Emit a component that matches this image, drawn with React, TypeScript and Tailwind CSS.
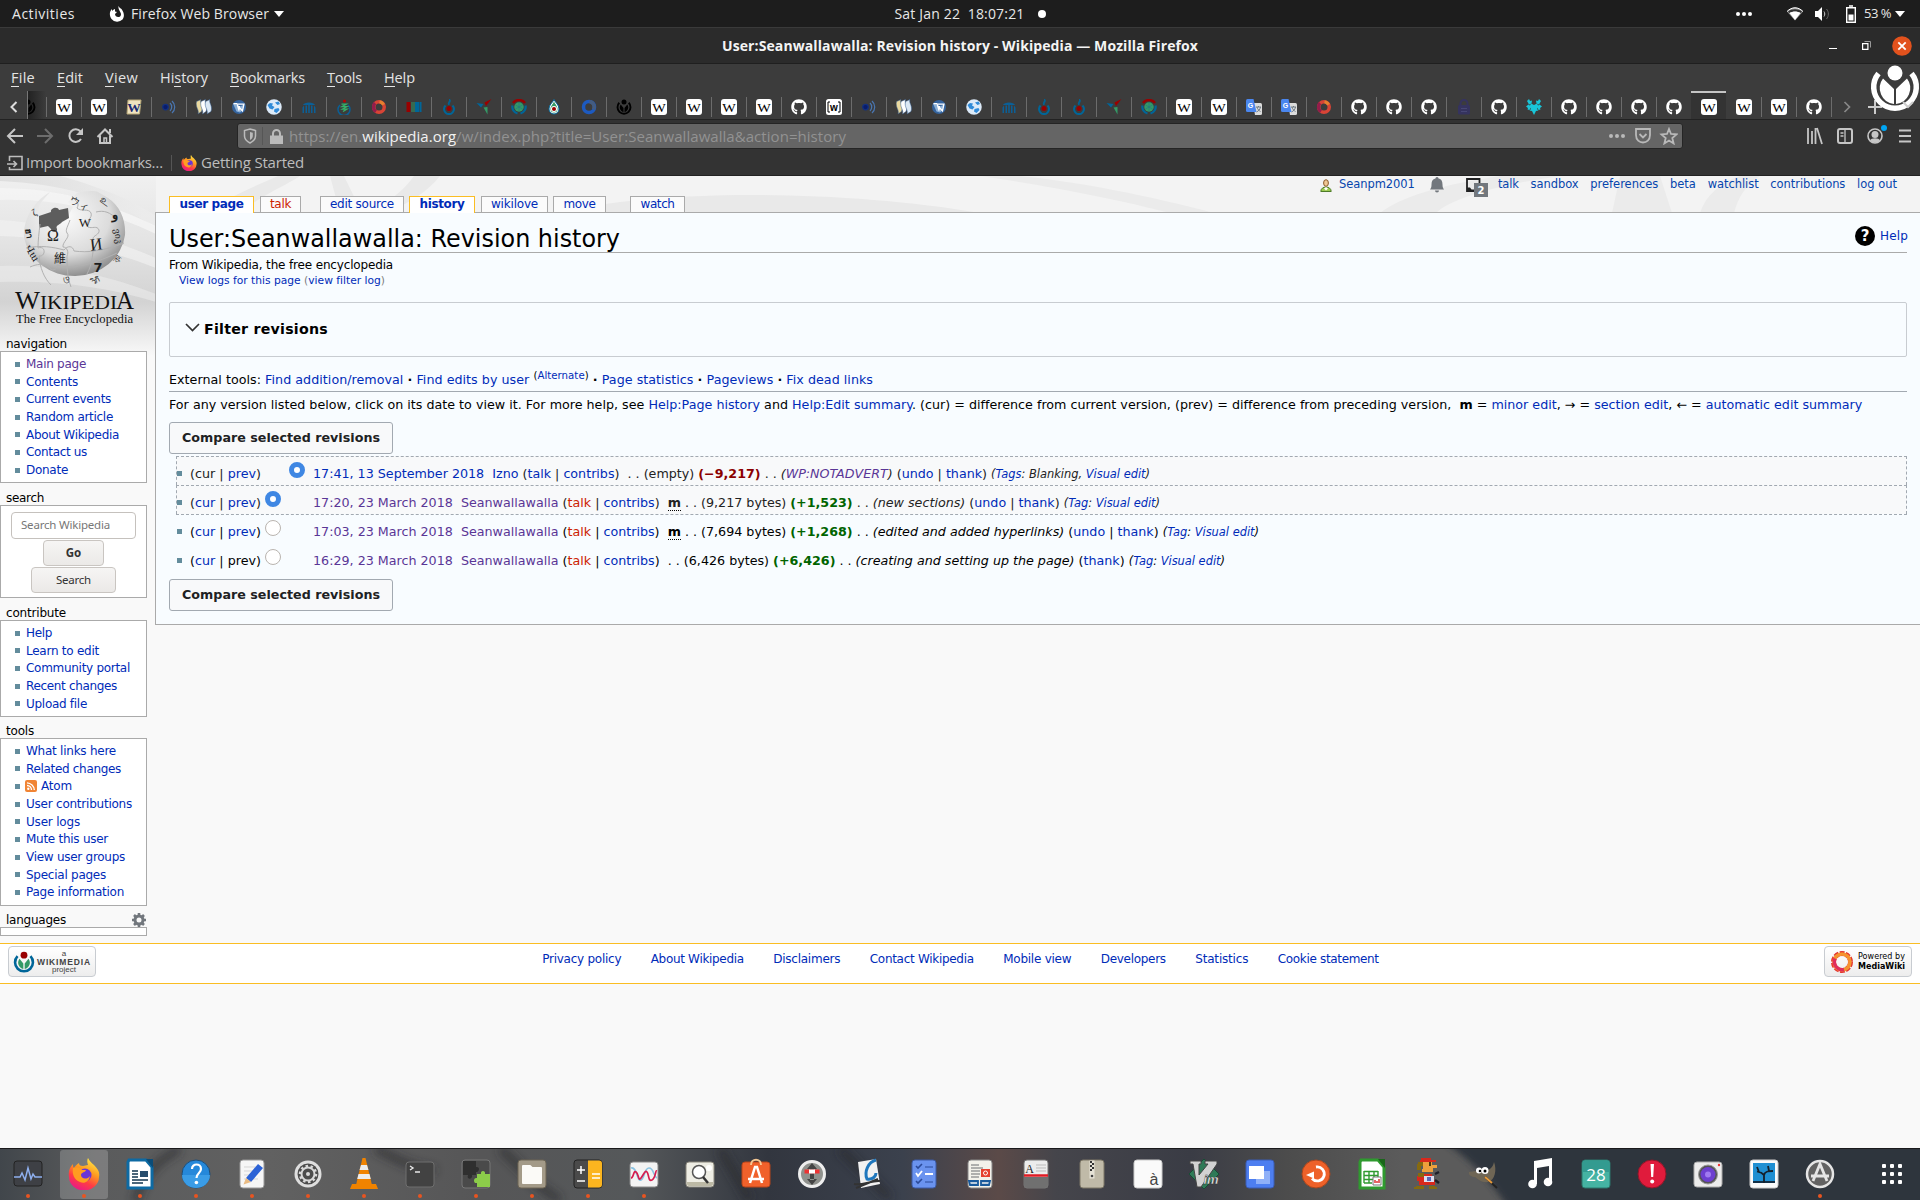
import { useLayoutEffect, useRef, useState } from "react";
import type { ReactNode } from "react";
import { FaGithub } from "react-icons/fa";

/** Inline text whose tracking is adjusted so that it spans exactly `w` pixels. */
function Fit({ w, children, className = "" }: { w: number; children: ReactNode; className?: string }) {
  const ref = useRef<HTMLSpanElement>(null);
  const [ls, setLs] = useState(0);
  useLayoutEffect(() => {
    const el = ref.current;
    if (!el) return;
    const n = (el.textContent || "").length;
    const natural = el.getBoundingClientRect().width - ls * n;
    if (n > 1) setLs((w - natural) / n);
  }, [w]);
  return (
    <span ref={ref} className={"inline-block whitespace-pre " + className} style={{ letterSpacing: ls + "px" }}>
      {children}
    </span>
  );
}

const L = ({ children }: { children: ReactNode }) => <a className="text-[#002bb8]">{children}</a>;
const V = ({ children }: { children: ReactNode }) => <a className="text-[#5a3696]">{children}</a>;
const R = ({ children }: { children: ReactNode }) => <a className="text-[#cc2200]">{children}</a>;

/* ---------- favicons ---------- */

const WikimediaMark = ({ body, ring, head }: { body: string; ring: string; head: string }) => (
  <>
    <circle cx="16" cy="6" r="5" fill={head} />
    <path d="M6.6 7.5A13 13 0 1 0 25.400 7.500" fill="none" stroke={ring} strokeWidth="3.800" />
    <path d="M9.500 11.200A9.200 9.200 0 0 0 15 26V18zM22.500 11.200A9.200 9.200 0 0 1 17 26V18z" fill={body} />
  </>
);

function Favicon({ kind }: { kind: string }) {
  if (kind === "gh") return <FaGithub className="size-4 text-white" />;
  if (kind === "W" || kind === "Wc")
    return (
      <svg className="size-4" viewBox="0 0 16 16">
        {kind === "W" ? (
          <rect width="16" height="16" rx="3" fill="#fff" />
        ) : (
          <path d="M2 1l13 0-1.500 14L1 15z" fill="#f0e4c0" stroke="#b9a878" />
        )}
        <text x="8" y="12.500" textAnchor="middle" fontFamily="Liberation Serif, serif" fontWeight={kind === "Wc" ? 700 : 400} fontSize="13.500" fill={kind === "Wc" ? "#1b2a70" : "#000"} textLength="13.500" lengthAdjust="spacingAndGlyphs">
          W
        </text>
      </svg>
    );
  return (
    <svg className="size-4" viewBox="0 0 32 32">
      {kind === "sound" && (
        <g fill="none" stroke="#4a76b0" strokeWidth="2.500">
          <circle cx="9" cy="16" r="5.500" fill="#0a1c6b" stroke="#12307f" />
          <path d="M18 8a11 11 0 0 1 0 16M22 4a16 16 0 0 1 0 24" />
        </g>
      )}
      {kind === "books" && (
        <g stroke="#31588c" strokeWidth="1">
          <path d="M1 5l9-4c-3 7 6 12 1 24l-7 5c3-9-6-13-3-25z" fill="#e9d9a0" />
          <path d="M10 5l9-4c-3 7 6 12 1 24l-7 5c3-9-6-13-3-25z" fill="#fff" />
          <path d="M19 5l9-4c-3 7 6 12 2 24l-8 5c3-9-6-13-3-25z" fill="#dce9f5" />
        </g>
      )}
      {kind === "wikt" && (
        <>
          <circle cx="16" cy="16" r="14" fill="#34639d" />
          <path d="M4 9l9 2 5 4 8-4-3 12-5 4-7-2z" fill="#8bb0d8" />
          <path d="M5 9h7l4 14 1-9M14 10h12l-3 14-8-9" stroke="#fff" strokeWidth="2.500" fill="none" />
        </>
      )}
      {kind === "globe" && (
        <>
          <circle cx="16" cy="16" r="15.500" fill="#dceaf8" />
          <path d="M3 12l5-4 6 1-2 4 5 3-4 5-6-2zM18 7l7-2 3 5-5 2zM17 20l8-2 2 4-6 6-5-3z" fill="#2f8ad8" />
        </>
      )}
      {kind === "bars" && (
        <path d="M3 28V17l3-4v15zm6 0V13h3v15zm5.500 0V12h3v16zM20 28V13h3v15zm6 0V13l3 4v11zM4 12C6 5 26 5 28 12z" fill="#0b5f96" />
      )}
      {kind === "helix" && (
        <>
          <circle cx="17" cy="4" r="3" fill="#b00" />
          <path d="M8 12a12 12 0 1 0 16 0" fill="none" stroke="#0b5f96" strokeWidth="3" />
          <path d="M11 10h10l-9 5h10l-9 5h9l-8 5" stroke="#35b06a" strokeWidth="2.500" fill="none" />
        </>
      )}
      {kind === "ring" && (
        <>
          <circle cx="16" cy="16" r="10.500" fill="none" stroke="#d84436" strokeWidth="7" />
          <path d="M8 8a11 11 0 0 0 2 17" fill="none" stroke="#941c4b" strokeWidth="6.500" />
          <path d="M17 5.500a10.500 10.500 0 0 1 8 6" fill="none" stroke="#e5802e" strokeWidth="6" />
        </>
      )}
      {kind === "bring" && (
        <>
          <circle cx="16" cy="16" r="11" fill="none" stroke="#1d5ac0" strokeWidth="7" />
          <path d="M17 5a11 11 0 0 1 8 16" fill="none" stroke="#445c80" strokeWidth="7" />
        </>
      )}
      {kind === "data" && (
        <>
          <path d="M1 6h8v20H1z" fill="#900" />
          <path d="M11 6h2v20h-2zm4 0h2v20h-2z" fill="#396" />
          <path d="M18 6h9v20h-9zm10 0h3v20h-3z" fill="#069" />
        </>
      )}
      {kind === "flame" && (
        <>
          <path d="M9 13a10 10 0 1 0 14 0" fill="none" stroke="#069" strokeWidth="4" />
          <path d="M17 0c4 5-1 7-1 12-4-4 2-7 1-12z" fill="#069" stroke="#069" strokeWidth="2" />
          <circle cx="16" cy="19" r="5" fill="#900" />
        </>
      )}
      {kind === "arrows" && (
        <>
          <path d="M31 0L20 14l-3-7z" fill="#900" />
          <path d="M1 8l14 2-5 7z" fill="#069" />
          <path d="M15 17l8-1v15z" fill="#396" />
        </>
      )}
      {kind === "meta" && (
        <>
          <path d="M4 8A14 12 0 0 1 28 8" fill="none" stroke="#900" strokeWidth="5" />
          <circle cx="16" cy="16" r="9.500" fill="#396" />
          <path d="M9 12l14 8M9 20l14-8M16 7v18" stroke="#1c6b8a" />
          <path d="M3 13a13.500 13.500 0 0 0 10 16M29 13a13.500 13.500 0 0 1-10 16" fill="none" stroke="#069" strokeWidth="4.500" />
        </>
      )}
      {kind === "drop" && (
        <>
          <path d="M16 1c3 7 10 10 10 19a10 10 0 0 1-20 0c0-9 7-12 10-19z" fill="#fff" stroke="#069" strokeWidth="2" />
          <path d="M16 5c3 7 7 9 7 15a7 7 0 0 1-14 0c0-6 4-8 7-15z" fill="#396" />
          <circle cx="16" cy="20" r="6" fill="#fff" />
          <circle cx="16" cy="20" r="4" fill="#900" />
        </>
      )}
      {kind === "wm" && <WikimediaMark body="#000" ring="#000" head="#000" />}
      {kind === "lw" && (
        <>
          <rect width="32" height="32" rx="5" fill="#fff" />
          <path d="M8 6H4v20h4M24 6h4v20h-4" fill="none" stroke="#000" strokeWidth="2" />
          <text x="16" y="23" textAnchor="middle" fontFamily="Liberation Sans, sans-serif" fontWeight="700" fontSize="20" fill="#000">w</text>
        </>
      )}
      {kind === "tr" && (
        <>
          <path d="M14 8h15a3 3 0 0 1 3 3v18a3 3 0 0 1-3 3H18z" fill="#dcdcdc" />
          <path d="M20 16h10M25 14v2m-3 0c1 5 4 7 7 9m0-9c-1 5-4 8-8 10" stroke="#65727c" strokeWidth="1.800" fill="none" />
          <path d="M3 0h12l6 26H3a3 3 0 0 1-3-3V3a3 3 0 0 1 3-3z" fill="#4a86ee" />
          <text x="9" y="18" textAnchor="middle" fontFamily="Liberation Sans, sans-serif" fontWeight="700" fontSize="14" fill="#fff">G</text>
        </>
      )}
      {kind === "lock" && (
        <>
          <path d="M9 14V9a7 7 0 0 1 14 0v5" fill="none" stroke="#35335f" strokeWidth="4" />
          <rect x="4" y="12" width="24" height="19" rx="3" fill="#35335f" />
          <path d="M10 19h12M10 25h12" stroke="#474775" strokeWidth="2" />
        </>
      )}
      {kind === "fox" && (
        <g fill="#19c5d8">
          <path d="M10 9l6 3 6-3 3 6-3 5 3 3-5 1-4 8-4-8-5-1 3-3-3-5z" />
          <path d="M2 4l4-4 2 4 4-1-1 6-5 2zM30 4l-4-4-2 4-4-1 1 6 5 2zM0 15l5-4 5 4-3 7-4-1 1-3zM32 15l-5-4-5 4 3 7 4-1-1-3z" />
        </g>
      )}
    </svg>
  );
}

const tabs =
  "W W Wc sound books wikt globe bars helix ring data flame arrows meta drop bring wm W W W W gh lw sound books wikt globe bars flame flame arrows meta W W tr tr ring gh gh gh lock gh fox gh gh gh gh W W W gh".split(" ");
const ACTIVE_TAB = 47;

/* ---------- shell and browser chrome ---------- */

const FirefoxLogo = ({ className, id }: { className: string; id: string }) => (
  <svg className={className} viewBox="0 0 32 32">
    <defs>
      <linearGradient id={id} x1="0.8" y1="0" x2="0.3" y2="1">
        <stop offset="0" stopColor="#fff04a" />
        <stop offset="0.4" stopColor="#ff9a1f" />
        <stop offset="0.7" stopColor="#ff3c45" />
        <stop offset="1" stopColor="#e8188a" />
      </linearGradient>
    </defs>
    <path d="M20 0c2 4 4 5 6 7 4 4 6 7 5 12a15 13.500 0 0 1-30 0C0 13 2 9 5 6c0 2 0 3 1 4 1-2 3-4 5-5 0 2 1 3 4 3l5-1c-1-3-1-5 0-7z" fill={`url(#${id})`} />
    <circle cx="17" cy="17" r="6.500" fill="#6a35d6" />
    <path d="M5 10c4-2 8 0 9 2l4 0c-1 3-5 2-5 5 0 4 6 5 9 1-1 6-6 8-10 6-6-2-8-8-7-14z" fill="#ff9d20" />
  </svg>
);

function TopBar() {
  return (
    <div className="grid h-[27px] grid-cols-3 items-center bg-[#1d1d1d] text-[14px] text-[#e8e8e8]">
      <div className="flex items-center">
        <Fit w={63} className="ml-3">Activities</Fit>
        <svg className="ml-[34px] size-4" viewBox="0 0 16 16">
          <path d="M9.500 0c1 2 2 2 3 3 3 4 3 8 1 10.500a7.500 7.500 0 0 1-11-.5C0 9.500.5 5 3 3v2c1-1 2-2 3-2v2.500l2 .5-2 2c0 4 6 4 6 .5 0-3-3-4-2.500-8.500z" fill="#fff" />
        </svg>
        <Fit w={138} className="ml-1.5">Firefox Web Browser</Fit>
        <i className="ml-[5px] border-x-[5px] border-t-[6px] border-x-transparent border-t-white" />
      </div>
      <div className="flex items-center justify-center">
        <Fit w={130} className="ml-[20px]">Sat Jan 22  18:07:21</Fit>
        <i className="ml-[13px] size-2 rounded-full bg-white" />
      </div>
      <div className="flex items-center justify-end pr-[15px]">
        <i className="mr-[2px] size-[4px] rounded-full bg-white" />
        <i className="mr-[2px] size-[4px] rounded-full bg-white" />
        <i className="mr-[35px] size-[4px] rounded-full bg-white" />
        <svg className="mr-[12px] h-[14px] w-[16px]" viewBox="0 0 16 14">
          <path d="M0 4.500C5-.5 11-.5 16 4.500L8 13.500z" fill="#999" />
          <path d="M1 4.500C5 1.500 11 1.500 15 4.500l-1.200 1.500C10 4 6 4 2.200 6z" fill="#333" />
          <path d="M2.500 6c3-2 8-2 11 0L8 13z" fill="#fff" />
          <path d="M0 4.500C5-.5 11-.5 16 4.500" stroke="#fff" fill="none" />
        </svg>
        <svg className="mr-[16px] h-[14px] w-[15px]" viewBox="0 0 15 14">
          <path d="M0 4h3l4-4v14l-4-4H0z" fill="#fff" />
          <path d="M9 4.500c1 1.500 1 3.500 0 5" stroke="#ccc" fill="none" />
          <path d="M11.500 2c2.500 3 2.500 7 0 10" stroke="#666" fill="none" />
        </svg>
        <svg className="mr-[8px] h-[18px] w-[10px]" viewBox="0 0 10 18">
          <path d="M.7 2.700h8.600v14.600H.7zM3 1h4" fill="none" stroke="#fff" strokeWidth="1.400" />
          <path d="M2.500 9.500h5v6h-5z" fill="#fff" />
        </svg>
        <Fit w={27} className="text-[13px]">53 %</Fit>
        <i className="ml-[4px] border-x-[5px] border-t-[6px] border-x-transparent border-t-white" />
      </div>
    </div>
  );
}

function TitleBar() {
  return (
    <div className="grid h-[37px] grid-cols-[1fr_auto_1fr] items-center border-t border-b border-t-[#3a3a3a] border-b-[#1f1f1f] bg-[#2b2b2b]">
      <span />
      <Fit w={476} className="text-[14px] font-bold text-[#f4f4f4]">
        User:Seanwallawalla: Revision history - Wikipedia — Mozilla Firefox
      </Fit>
      <div className="flex items-center justify-end gap-[25px] pr-[8px]">
        <i className="mt-[5px] h-px w-[8px] bg-white" />
        <svg className="size-[9px]" viewBox="0 0 9 9">
          <path d="M.6 2.600h5.300v5.800H.6z" fill="none" stroke="#fff" strokeWidth="1.200" />
          <path d="M2.500.5h6v6" fill="none" stroke="#999" />
        </svg>
        <svg className="-ml-[4px] size-[20px]" viewBox="0 0 19 19">
          <circle cx="9.500" cy="9.500" r="9.300" fill="#e2521d" />
          <path d="M6 6l7 7M13 6l-7 7" stroke="#fff" strokeWidth="1.700" />
        </svg>
      </div>
    </div>
  );
}

const menus: [string, string, number][] = [
  ["", "File", 24],
  ["", "Edit", 26],
  ["", "View", 33],
  ["Hi", "story", 48],
  ["", "Bookmarks", 75],
  ["", "Tools", 35],
  ["", "Help", 31],
];

function MenuAndTabs() {
  return (
    <div className="relative bg-[#3c3c3c]">
      <div className="flex h-[27px] items-center gap-[22px] pl-[11px] text-[14.500px] text-[#e4e4e4]">
        {menus.map(([pre, rest, w]) => (
          <Fit key={pre + rest} w={w}>
            {pre}
            <span className="inline-block border-b border-[#e4e4e4] leading-[17px]">{rest[0]}</span>
            {rest.slice(1)}
          </Fit>
        ))}
      </div>
      <div className="flex h-[28px] items-end">
        <div className="flex h-[28px] w-[28px] items-center justify-center border-r border-[#777] pt-[3px]">
          <svg className="h-3 w-2" viewBox="0 0 8 12">
            <path d="M6.500 1l-5 5 5 5" fill="none" stroke="#ddd" strokeWidth="2" />
          </svg>
        </div>
        <div className="flex h-[28px] w-[18px] items-center overflow-hidden bg-linear-to-r from-[#222] to-[#3c3c3c] pt-[3px]">
          <div className="-ml-2 shrink-0">
            <Favicon kind="wm" />
          </div>
        </div>
        {tabs.map((k, i) =>
          i === ACTIVE_TAB ? (
            <div key={i} className="flex h-[28px] w-[35px] items-center justify-center border-t-2 border-[#c4c4c4] bg-[#333] pt-px">
              <Favicon kind={k} />
            </div>
          ) : (
            <div key={i} className="flex h-[28px] w-[35px] items-center pt-[3px]">
              <i className={"h-5 w-px " + (i === ACTIVE_TAB + 1 ? "bg-transparent" : "bg-[#6c6c6c]")} />
              <div className="ml-[9px]">
                <Favicon kind={k} />
              </div>
            </div>
          ),
        )}
        <div className="flex h-[28px] items-center pt-[3px]">
          <i className="h-5 w-px bg-[#6c6c6c]" />
          <svg className="ml-[11px] h-3 w-2" viewBox="0 0 8 12">
            <path d="M1.500 1l5 5-5 5" fill="none" stroke="#888" strokeWidth="1.700" />
          </svg>
          <svg className="ml-[17px] size-[14px]" viewBox="0 0 14 14">
            <path d="M7 0v14M0 7h14" stroke="#ccc" strokeWidth="2" />
          </svg>
        </div>
      </div>
      <svg className="absolute top-0 right-0 h-[50px] w-[50px]" viewBox="0 0 50 50">
        <circle cx="25" cy="9" r="7.500" fill="#fff" />
        <path d="M8.500 9.500A21.300 21.300 0 1 0 41.500 9.500" fill="none" stroke="#fff" strokeWidth="5.500" />
        <path d="M13 14.500A16 16 0 0 0 24 40V25zM37 14.500A16 16 0 0 1 26 40V25z" fill="#fff" />
        <path d="M33 38l5 5 5-5" stroke="#ccc" strokeWidth="2" fill="none" />
      </svg>
    </div>
  );
}

function NavBar() {
  return (
    <div className="flex h-[32px] items-center border-t border-[#222] bg-[#333]">
      <svg className="h-[20px] w-[237px]" viewBox="0 0 237 20" fill="none" stroke="#c6c6c6" strokeWidth="2">
        <path d="M23 10H8M15 3l-7 7 7 7" />
        <path d="M37 10h15M45 3l7 7-7 7" stroke="#6d6d6d" />
        <path d="M80.500 5.500A6.300 6.300 0 1 0 81 13" />
        <path d="M83 2v7h-7z" fill="#c6c6c6" stroke="none" />
        <path d="M97.500 11l7.500-7.500 7.500 7.500M100 9.500V17h10V9.500M110 3v4" />
        <path d="M104 17v-5h2.500v5" strokeWidth="1.500" />
      </svg>
      <div className="mt-px flex h-[26px] w-[1446px] items-center rounded-[3px] border border-[#252525] bg-[#656565]">
        <svg className="ml-[5px] h-[16px] w-[14px]" viewBox="0 0 14 16">
          <path d="M7 1l5.500 1.500V8c0 3-2.500 5.500-5.500 7-3-1.500-5.500-4-5.500-7V2.500z" fill="none" stroke="#bbb" strokeWidth="1.500" />
          <path d="M7 4l2.800.8V8C9.800 10 8.500 11.200 7 12z" fill="#bbb" />
        </svg>
        <i className="ml-[5px] h-[18px] w-px bg-[#565656]" />
        <svg className="ml-[7px] h-[15px] w-[13px]" viewBox="0 0 13 15">
          <path d="M3 7V4.500a3.500 3.500 0 0 1 7 0V7" fill="none" stroke="#bbb" strokeWidth="2" />
          <path d="M0 6.500h13V15H0z" fill="#bbb" />
        </svg>
        <Fit w={557} className="ml-[6px] text-[15px] text-[#929292]">
          https://en.<span className="text-[#f2f2f2]">wikipedia.org</span>/w/index.php?title=User:Seanwallawalla&amp;action=history
        </Fit>
        <svg className="mr-[4px] ml-auto h-[18px] w-[70px]" viewBox="0 0 70 18" fill="none" stroke="#b9b9b9" strokeWidth="1.800">
          <g fill="#b9b9b9" stroke="none">
            <circle cx="3" cy="9" r="2" />
            <circle cx="9" cy="9" r="2" />
            <circle cx="15" cy="9" r="2" />
          </g>
          <path d="M28 2h14v6c0 10-14 10-14 0z" />
          <path d="M31.500 7l3.500 3.500L38.500 7" />
          <path d="M61 2l2 5 5.500.4-4.200 3.600 1.300 5.400L61 13.500l-4.600 2.900 1.300-5.400-4.200-3.600L59 7z" />
        </svg>
      </div>
      <svg className="mr-[5px] ml-auto h-[24px] w-[112px]" viewBox="0 0 112 24" fill="none" stroke="#c6c6c6" strokeWidth="2">
        <path d="M5 4v16M9 7v13M12.500 4v16M14 4l5 16" strokeWidth="1.800" />
        <rect x="35" y="5" width="14" height="14" rx="2" />
        <path d="M42 5v14M37.500 9h3M37.500 12h3" strokeWidth="1.300" />
        <circle cx="72" cy="12" r="7" strokeWidth="1.600" />
        <circle cx="72" cy="10.500" r="3.500" fill="#c6c6c6" stroke="none" />
        <path d="M67 16.500c1-3 9-3 10 0-3 3-7 3-10 0z" fill="#c6c6c6" stroke="none" />
        <circle cx="81" cy="4" r="3" fill="#00a6f5" stroke="none" />
        <path d="M96 6.500h12M96 12h12M96 17.500h12" />
      </svg>
    </div>
  );
}

function BookmarksBar() {
  return (
    <div className="flex h-[25px] items-center border-b border-[#222] bg-[#333] text-[15px] text-[#bdbdbd]">
      <svg className="-mt-px ml-[7px] size-4" viewBox="0 0 16 16" fill="none" stroke="#bdbdbd" strokeWidth="1.600">
        <path d="M2.500 6V1.500h12.500v13H2.500V12M0 9h9M6.500 6l3 3-3 3" />
      </svg>
      <Fit w={137} className="-mt-px ml-[3px]">Import bookmarks…</Fit>
      <i className="ml-[8px] h-4 w-px bg-[#555]" />
      <FirefoxLogo className="-mt-px ml-[9px] size-4" id="ffBookmark" />
      <Fit w={103} className="-mt-px ml-[4px]">Getting Started</Fit>
    </div>
  );
}

/* ---------- wiki page ---------- */

const HeaderSwoosh = () => (
  <svg className="absolute top-0 left-0 h-[180px] w-full" viewBox="0 0 1920 180" preserveAspectRatio="none">
    <defs>
      <linearGradient id="sideFade" x1="0" y1="0" x2="0" y2="1">
        <stop offset="0" stopColor="#f0f0f0" />
        <stop offset="0.35" stopColor="#e4e4e4" />
        <stop offset="0.7" stopColor="#d3d3d3" />
        <stop offset="1" stopColor="#f9f9f9" />
      </linearGradient>
      <linearGradient id="sideDark" x1="0" y1="0" x2="1" y2="0.150">
        <stop offset="0" stopColor="#d2d2d2" />
        <stop offset="1" stopColor="#ededed" />
      </linearGradient>
    </defs>
    <path d="M0 0h1920v37H0z" fill="#f3f3f3" />
    <path d="M0 0h156v180H0z" fill="url(#sideFade)" />
    <path d="M0 0h60C90 8 130 22 156 40v12C110 20 60 8 0 5z" fill="url(#sideDark)" opacity="0.6" />
    <path d="M0 24C60 22 110 36 156 58V50C110 28 60 12 0 12z" fill="#f5f5f5" opacity="0.8" />
    <path d="M0 60C60 62 110 74 156 92V82C110 62 60 48 0 44z" fill="#f3f3f3" opacity="0.6" />
    <path d="M0 106C60 104 110 112 156 126v-8C110 100 60 88 0 90z" fill="#efefef" opacity="0.5" />
    <path d="M240 37C260 20 285 10 300 0h-22C250 12 220 26 205 37zM330 0h14l18 37h-22zM440 0h-26c-10 14-26 28-50 37h22c24-10 42-22 54-37zM560 37c90-24 280-24 420 0z" fill="#e9e9e9" />
    <path d="M980 0c70 10 140 24 190 37h44C1150 20 1080 6 1020 0zM1380 37c20-16 60-28 120-37h60c-70 10-110 24-124 37zM1620 0h40l12 37h-60zM1700 37c6-18 20-30 40-37h20c-14 8-22 22-26 37z" fill="#ebebeb" />
  </svg>
);

const WikiLogo = () => (
  <svg className="relative h-[155px] w-[155px]" viewBox="0 0 155 155">
    <defs>
      <radialGradient id="globeShade" cx="0.4" cy="0.3" r="0.75">
        <stop offset="0" stopColor="#fbfbfb" />
        <stop offset="0.6" stopColor="#dcdcdc" />
        <stop offset="1" stopColor="#838383" />
      </radialGradient>
    </defs>
    <path d="M44 19c-4 4-6 9-5 13 2 5-1 7 1 11l28-7 5-9-5-5 9-9c8-2 16-3 21-1l10 6c12 8 18 22 17 37a51 46.500 0 0 1-101 2C23 43 31 23 50 12z" transform="translate(0 4)" fill="url(#globeShade)" />
    <path d="M39 40l12-4c-1-4 7-6 8-2l9-2 1 10-7 4c-2 3-7 3-5 7 1 4-6 4-6 0l-3-3-9 2z" fill="#5d5d5d" />
    <g fill="none" stroke="#b1b1b1" strokeWidth="1">
      <path d="M40 48c-1 9-2 16-2 24 8-3 8 9 1 8 1 12 5 22 12 29M70 44c-2 6-5 10-3 13 4 4-5 9-4 14 4 0 6 5 4 9 0 10 0 20 4 31M72 20c4 6 8 7 5 12 4 4 12 0 14 5s-6 8-3 14c4 2 9-2 11 3 1 5-6 5-6 9 1 12-1 26-6 35M26 72c15-3 27-1 38 2 4-5 9-4 10 1 14 2 29 0 50-8M30 91c7-3 13-4 19 0 2 5 9 3 8-2 15 4 32 1 60-12M96 36c8-2 14 0 22 8" />
    </g>
    <g fill="#1d1d1d" fontFamily="Liberation Serif, DejaVu Serif, serif" textAnchor="middle">
      <text x="53" y="65" fontSize="16">Ω</text>
      <text x="85" y="51" fontSize="13">W</text>
      <text x="96" y="74" fontSize="17" transform="rotate(-7 96 68)">И</text>
      <text x="60" y="87" fontSize="12" fontFamily="Noto Sans CJK SC, sans-serif">維</text>
      <text x="98" y="96" fontSize="13" fontWeight="700" fontFamily="DejaVu Sans, sans-serif">7</text>
      <text x="34" y="40" fontSize="10" transform="rotate(-30 34 36)">ζ</text>
      <text x="30" y="61" fontSize="9" fontWeight="700" transform="rotate(80 30 57)">ฮา</text>
      <text x="80" y="31" fontSize="10" transform="rotate(25 80 27)">ウィ</text>
      <text x="104" y="28" fontSize="11" transform="rotate(35 104 26)">உ</text>
      <text x="115" y="43" fontSize="13" fontWeight="700">و</text>
      <text x="119" y="64" fontSize="9" transform="rotate(80 119 60)">ვიკ</text>
      <text x="31" y="80" fontSize="10" transform="rotate(60 31 78)">Վա</text>
      <text x="66" y="107" fontSize="10" transform="rotate(15 66 105)">ও</text>
      <text x="96" y="107" fontSize="8" transform="rotate(-25 96 105)">วิกิ</text>
      <text x="117" y="86" fontSize="9" transform="rotate(-55 117 82)">ক৷</text>
    </g>
    <g fill="#111" fontFamily="Liberation Serif, serif">
      <text x="15" y="133" fontSize="25" textLength="25" lengthAdjust="spacingAndGlyphs">W</text>
      <text x="40" y="133" fontSize="19.500" textLength="77" lengthAdjust="spacingAndGlyphs">IKIPEDI</text>
      <text x="116" y="133" fontSize="25" textLength="18" lengthAdjust="spacingAndGlyphs">A</text>
      <text x="16" y="147" fontSize="13.500" textLength="117" lengthAdjust="spacingAndGlyphs">The Free Encyclopedia</text>
    </g>
  </svg>
);

const Heading = ({ children }: { children: ReactNode }) => (
  <h3 className="relative flex h-4 items-center justify-between pt-[2px] pl-1.5 leading-4 text-black">{children}</h3>
);

function Portlet({ title, items, h }: { title: [string, number]; items: [string, number][]; h: string }) {
  return (
    <>
      <Heading>
        <Fit w={title[1]}>{title[0]}</Fit>
      </Heading>
      <ul className={"relative w-[147px] border border-[#aaa] bg-white pt-[3.300px] " + h}>
        {items.map(([t, w]) => (
          <li key={t} className="flex h-[17.660px] items-center pl-[14px]">
            <i className="mr-[6px] size-[5px] bg-[#638c9c]" />
            {t === "Atom" && (
              <svg className="mr-1 -ml-px size-3" viewBox="0 0 12 12">
                <rect width="12" height="12" rx="2" fill="#f08434" />
                <circle cx="3.300" cy="8.800" r="1.200" fill="#fff" />
                <path d="M2 5.500a4.500 4.500 0 0 1 4.500 4.500M2 2.800A7.500 7.500 0 0 1 9.300 10" stroke="#fff" strokeWidth="1.300" fill="none" />
              </svg>
            )}
            <Fit w={w} className={t === "Main page" ? "text-[#5a3696]" : "text-[#002bb8]"}>
              {t}
            </Fit>
          </li>
        ))}
      </ul>
    </>
  );
}

function Sidebar() {
  return (
    <aside className="flex w-[155px] shrink-0 flex-col text-[12px]">
      <WikiLogo />
      <div className="h-[4px]" />
      <Portlet
        h="h-[132px]"
        title={["navigation", 61]}
        items={[["Main page", 60], ["Contents", 52], ["Current events", 85], ["Random article", 87], ["About Wikipedia", 93], ["Contact us", 61], ["Donate", 42]]}
      />
      <div className="h-[6px]" />
      <Heading>
        <Fit w={38}>search</Fit>
      </Heading>
      <div className="flex h-[93px] w-[147px] flex-col items-center border border-[#aaa] bg-white pt-[6px] font-['Noto_Sans',sans-serif] text-[11.500px] text-[#333]">
        <div className="flex h-[27px] w-[125px] items-center rounded-[4px] border border-[#c5c1bd] bg-white pl-[9px] text-[#777]">
          <Fit w={89} className="-mt-px">Search Wikipedia</Fit>
        </div>
        <div className="mt-px flex h-[26px] w-[61px] items-center justify-center rounded-[4px] border border-[#c9c5c1] bg-linear-to-b from-[#f6f5f4] to-[#ebe9e7] font-bold">Go</div>
        <div className="mt-px flex h-[26px] w-[85px] items-center justify-center rounded-[4px] border border-[#c9c5c1] bg-linear-to-b from-[#f6f5f4] to-[#ebe9e7]">
          <Fit w={35}>Search</Fit>
        </div>
      </div>
      <div className="h-[6px]" />
      <Portlet
        h="h-[97px]"
        title={["contribute", 60]}
        items={[["Help", 26], ["Learn to edit", 73], ["Community portal", 104], ["Recent changes", 91], ["Upload file", 61]]}
      />
      <div className="h-[5px]" />
      <Portlet
        h="h-[168px]"
        title={["tools", 28]}
        items={[["What links here", 90], ["Related changes", 95], ["Atom", 31], ["User contributions", 106], ["User logs", 54], ["Mute this user", 82], ["View user groups", 99], ["Special pages", 80], ["Page information", 98]]}
      />
      <div className="h-[5px]" />
      <Heading>
        <Fit w={60}>languages</Fit>
        <svg className="mr-[9px] size-[14px]" viewBox="0 0 14 14">
          <circle cx="7" cy="7" r="4" fill="none" stroke="#72777d" strokeWidth="3" />
          <path d="M7 0v3M7 11v3M0 7h3M11 7h3M2 2l2 2M10 10l2 2M12 2l-2 2M4 10l-2 2" stroke="#72777d" strokeWidth="2.600" />
        </svg>
      </Heading>
      <div className="h-[9px] w-[147px] border border-[#aaa] bg-white" />
    </aside>
  );
}

function PersonalTools() {
  const links: [string, number][] = [["talk", 21], ["sandbox", 48], ["preferences", 68], ["beta", 26], ["watchlist", 51], ["contributions", 75], ["log out", 40]];
  return (
    <div className="flex h-[16px] items-center justify-end pt-[2px] pr-[23px] text-[11.500px] text-[#0645ad]">
      <svg className="mr-[7px] h-[13px] w-[12px]" viewBox="0 0 12 13">
        <path d="M.8 12.500c0-6 10.400-6 10.400 0z" fill="#9ccb50" stroke="#4d7a28" />
        <path d="M6 8l-2 1.500 2 2 2-2z" fill="#fff" />
        <ellipse cx="6" cy="4" rx="2.400" ry="3.300" fill="#f0c894" stroke="#8a5a2b" />
      </svg>
      <Fit w={76}>Seanpm2001</Fit>
      <svg className="ml-[15px] h-[16px] w-[14px]" viewBox="0 0 14 16">
        <path d="M7 0c1 0 1.500 1 1.500 1.500 3 .5 4 3 4 6 0 3 .5 3.500 1.500 5H0c1-1.500 1.500-2 1.500-5 0-3 1-5.500 4-6C5.500 1 6 0 7 0zM5 13.500h4a2 2 0 0 1-4 0z" fill="#72777d" />
      </svg>
      <div className="relative mr-[12px] ml-[22px] h-[14px] w-[20px]">
        <svg className="h-[14px] w-[15px]" viewBox="0 0 15 14">
          <path d="M1 1h12.500v12H1z" fill="none" stroke="#202122" strokeWidth="1.800" />
          <path d="M1 9.500h3l1.500 2H13v2H1z" fill="#202122" />
        </svg>
        <span className="absolute top-[5px] left-[8px] flex h-[14px] w-[14px] items-center justify-center bg-[#72777d] text-[10px] font-bold text-white">2</span>
      </div>
      <div className="flex gap-[11.700px]">
        {links.map(([t, w]) => (
          <Fit key={t} w={w}>{t}</Fit>
        ))}
      </div>
    </div>
  );
}

const pageTabs: { t: string; w: number; box: string; on?: boolean; red?: boolean }[] = [
  { t: "user page", w: 64, box: "w-[85px]", on: true },
  { t: "talk", w: 21, box: "ml-[6px] w-[41px]", red: true },
  { t: "edit source", w: 64, box: "ml-[19px] w-[84px]" },
  { t: "history", w: 45, box: "ml-[5px] w-[66px]", on: true },
  { t: "wikilove", w: 47, box: "ml-[6px] w-[67px]" },
  { t: "move", w: 32, box: "ml-[5px] w-[53px]" },
  { t: "watch", w: 34, box: "ml-[24px] w-[55px]" },
];

function Radio({ on }: { on?: boolean }) {
  return on ? (
    <i className="block size-4 rounded-full border-[5px] border-[#3f87e3] bg-white" />
  ) : (
    <i className="block size-4 rounded-full border border-[#b9b4af] bg-white" />
  );
}

type Rev = { cur: boolean; prev: boolean; radio: "left" | "right"; on?: boolean; sel?: boolean; w: number; body: ReactNode };

const Minor = () => <abbr className="border-b border-dotted border-black font-bold no-underline">m</abbr>;
const Tag = ({ children }: { children: ReactNode }) => <span className="text-[11.430px] italic">{children}</span>;
const Plus = ({ children }: { children: ReactNode }) => <b className="text-[#006400]">{children}</b>;
const Author = () => (
  <>
    <V>Seanwallawalla</V> (<R>talk</R> | <L>contribs</L>)
  </>
);

const revisions: Rev[] = [
  {
    cur: false, prev: true, radio: "right", on: true, sel: true, w: 837,
    body: (
      <>
        <L>17:41, 13 September 2018</L>{"  "}<L>Izno</L> (<L>talk</L> | <L>contribs</L>){"  "}. . (empty) <b className="text-[#8b0000]">(−9,217)</b> . . <i>(<V>WP:NOTADVERT</V>)</i> (<L>undo</L> | <L>thank</L>) <Tag>(<L>Tags</L>: Blanking, <L>Visual edit</L>)</Tag>
      </>
    ),
  },
  {
    cur: true, prev: true, radio: "left", on: true, sel: true, w: 847,
    body: (
      <>
        <V>17:20, 23 March 2018</V>{"  "}<Author />{"  "}<Minor /> . . (9,217 bytes) <Plus>(+1,523)</Plus> . . <i>(new sections)</i> (<L>undo</L> | <L>thank</L>) <Tag>(<L>Tag</L>: <L>Visual edit</L>)</Tag>
      </>
    ),
  },
  {
    cur: true, prev: true, radio: "left", w: 946,
    body: (
      <>
        <V>17:03, 23 March 2018</V>{"  "}<Author />{"  "}<Minor /> . . (7,694 bytes) <Plus>(+1,268)</Plus> . . <i>(edited and added hyperlinks)</i> (<L>undo</L> | <L>thank</L>) <Tag>(<L>Tag</L>: <L>Visual edit</L>)</Tag>
      </>
    ),
  },
  {
    cur: true, prev: false, radio: "left", w: 912,
    body: (
      <>
        <V>16:29, 23 March 2018</V>{"  "}<Author />{"  "}. . (6,426 bytes) <Plus>(+6,426)</Plus> . . <i>(creating and setting up the page)</i> (<L>thank</L>) <Tag>(<L>Tag</L>: <L>Visual edit</L>)</Tag>
      </>
    ),
  },
];

const CompareButton = ({ className }: { className: string }) => (
  <button className={"flex h-8 w-[224px] items-center rounded-[3px] border border-[#a2a9b1] bg-[#f8f9fa] pl-3 text-[12.700px] font-bold text-[#202122] " + className}>
    <Fit w={198}>Compare selected revisions</Fit>
  </button>
);

function Content() {
  return (
    <main className="relative flex min-w-0 flex-1 flex-col">
      <PersonalTools />
      <div className="relative z-10 mt-1 flex h-[17px] items-end pl-[14px] text-[12px]">
        {pageTabs.map((p) => (
          <div
            key={p.t}
            className={
              "flex justify-center border border-b-0 leading-[15px] " +
              (p.on ? "h-[17px] border-[#fabd23] bg-white pb-px font-bold " : "h-[16px] border-[#aaa] bg-[#fbfbfb] ") +
              (p.red ? "text-[#cc2200] " : "text-[#002bb8] ") +
              (p.on ? "" : "mb-[1px] ") +
              p.box
            }
          >
            <Fit w={p.w}>{p.t}</Fit>
          </div>
        ))}
      </div>
      <section className="-mt-px flex h-[413px] flex-col border border-r-0 border-[#aaa] bg-[#f8fcff] pr-[13px] pl-[13px] text-[12.700px] text-black">
        <div className="mt-[14px] flex h-[26px] justify-between border-b border-[#aaa]">
          <h1 className="text-[23.880px] leading-[25px]">
            <Fit w={451}>User:Seanwallawalla: Revision history</Fit>
          </h1>
          <div className="-mt-[1px] -mr-px flex h-[20px] items-center gap-[5px] text-[12px]">
            <span className="flex size-5 items-center justify-center rounded-full bg-black text-[15px] font-bold text-white">?</span>
            <Fit w={28} className="text-[#002bb8]">Help</Fit>
          </div>
        </div>
        <div className="mt-[4px] h-4 text-[12px] leading-4">
          <Fit w={224}>From Wikipedia, the free encyclopedia</Fit>
        </div>
        <div className="h-[15px] pl-[10px] text-[10.700px] leading-[15px] text-[#7d7d7d]">
          <Fit w={206}>
            <L>View logs for this page</L> (<L>view filter log</L>)
          </Fit>
        </div>
        <div className="mt-[14px] flex h-[55px] items-center rounded-[2px] border border-[#c8ccd1] pl-[15px]">
          <svg className="-mt-[5px] h-[9px] w-[15px]" viewBox="0 0 15 9">
            <path d="M1 1l6.500 6.500L14 1" fill="none" stroke="#333" strokeWidth="1.700" />
          </svg>
          <Fit w={124} className="mt-px ml-[4px] text-[14.200px] font-bold">Filter revisions</Fit>
        </div>
        <div className="mt-[13px] h-[22px] border-b border-[#a2a9b1] leading-[19px]">
          <Fit w={704}>
            External tools: <L>Find addition/removal</L> <b>·</b> <L>Find edits by user</L> <span className="relative -top-[5px] text-[10.200px]">(<L>Alternate</L>)</span> <b>·</b> <L>Page statistics</L> <b>·</b> <L>Pageviews</L> <b>·</b> <L>Fix dead links</L>
          </Fit>
        </div>
        <div className="mt-[5px] h-4 leading-4">
          <Fit w={1693}>
            For any version listed below, click on its date to view it. For more help, see <L>Help:Page history</L> and <L>Help:Edit summary</L>. (cur) = difference from current version, (prev) = difference from preceding version,{"  "}<b>m</b> = <L>minor edit</L>, → = <L>section edit</L>, ← = <L>automatic edit summary</L>
          </Fit>
        </div>
        <CompareButton className="mt-[9px]" />
        <ul className="mt-[2px] ml-[7px]">
          {revisions.map((r, i) => (
            <li
              key={i}
              className={
                "flex h-[29px] items-start border-t border-dashed pt-[5px] leading-6 " +
                (r.sel ? "border-x border-[#a2a9b1] bg-[#f8f9fa] text-[#222]" : i === 2 ? "border-t-[#a2a9b1] pl-px" : "border-transparent pl-px")
              }
            >
              <i className="mt-[9px] mr-[8px] size-[5px] bg-[#638c9c]" />
              <Fit w={71}>
                ({r.cur ? <L>cur</L> : "cur"} | {r.prev ? <L>prev</L> : "prev"})
              </Fit>
              <div className={"w-[52px] " + (r.radio === "left" ? "pl-[4px]" : "pl-[28px]")}>
                <Radio on={r.on} />
              </div>
              <Fit w={r.w}>{r.body}</Fit>
            </li>
          ))}
        </ul>
        <CompareButton className="mt-[7px]" />
      </section>
    </main>
  );
}

function Footer() {
  const links: [string, number][] = [["Privacy policy", 79], ["About Wikipedia", 93], ["Disclaimers", 67], ["Contact Wikipedia", 104], ["Mobile view", 68], ["Developers", 65], ["Statistics", 53], ["Cookie statement", 101]];
  return (
    <footer className="relative flex h-[41px] items-start justify-between border-y border-[#fabd23] bg-white px-2 pt-[2px] text-[12px]">
      <div className="flex h-[31px] w-[88px] items-center rounded-[4px] border border-[#c8ccd1] bg-linear-to-b from-white to-[#ededed] pl-1">
        <svg className="size-[22px]" viewBox="0 0 32 32">
          <WikimediaMark body="#396" ring="#069" head="#900" />
        </svg>
        <div className="ml-[2px] flex flex-col items-center font-['Liberation_Sans',sans-serif] text-[8px] leading-[8px] text-[#444]">
          <span>a</span>
          <Fit w={54} className="text-[8.500px] font-bold">WIKIMEDIA</Fit>
          <span>project</span>
        </div>
      </div>
      <div className="flex gap-[29.500px] pt-[5px] pl-px leading-4 text-[#002bb8]">
        {links.map(([t, w]) => (
          <Fit key={t} w={w}>{t}</Fit>
        ))}
      </div>
      <div className="flex h-[31px] w-[88px] items-center rounded-[4px] border border-[#c8ccd1] bg-linear-to-b from-white to-[#ededed] pl-[5px]">
        <svg className="size-6" viewBox="0 0 24 24">
          <circle cx="12" cy="12" r="8.500" fill="none" stroke="#e3342f" strokeWidth="5" strokeDasharray="4.200 1.200" />
          <circle cx="12" cy="12" r="8" fill="none" stroke="#f5922f" strokeWidth="3.500" />
          <path d="M5 8.500a8 8 0 0 0 9 11" fill="none" stroke="#e02d5c" strokeWidth="3.500" />
        </svg>
        <div className="ml-[4px] flex flex-col items-start text-[8px] leading-[9.500px] text-black">
          <Fit w={47}>Powered by</Fit>
          <Fit w={47} className="font-bold">MediaWiki</Fit>
        </div>
      </div>
    </footer>
  );
}

/* ---------- dock ---------- */

const Sq = ({ f, s = "#222", x = 2, y = 2, w = 28, h = 28 }: { f: string; s?: string; x?: number; y?: number; w?: number; h?: number }) => (
  <rect x={x} y={y} width={w} height={h} rx="3" fill={f} stroke={s} strokeWidth="1" />
);

const sans = "Liberation Sans, sans-serif";

const dockIcons: ReactNode[] = [
  <><Sq f="#3e4045" y={3} h={25} /><path d="M2 19h6l2-4 3 7 3-12 3 11 2-5 2 3h7" fill="none" stroke="#8fb0ef" strokeWidth="1.500" /></>,
  null,
  <><path d="M5 2h17l6 7v21H4V4z" fill="#fff" stroke="#0e6aa3" strokeWidth="3" /><path d="M22 1h7v9z" fill="#0a4c78" /><path d="M8 13h6M8 16h6M8 19h6M8 22h16M8 25h11" stroke="#12344f" strokeWidth="1.500" /><path d="M16 13h8v6h-8z" fill="#274d6d" /></>,
  <><circle cx="16" cy="16" r="14" fill="#2588da" stroke="#1f4e78" /><path d="M2 17a14 13 0 0 0 28 0z" fill="#3a9ce6" /><path d="M12 11c0-6 9-6 9 0 0 4-4.500 4-4.500 9" stroke="#fff" strokeWidth="2.200" fill="none" /><circle cx="16.400" cy="24.500" r="1.800" fill="#fff" /></>,
  <><Sq f="#f6f6f6" s="#999" x={4} w={24} /><path d="M8 9h12M8 13h12M8 17h10M8 21h14" stroke="#d5d5d5" /><path d="M10 20L22 6l5 4-12 14z" fill="#2b62d6" /><path d="M7.500 26.500l2.500-6.500 5 4z" fill="#e9bb83" /></>,
  <><circle cx="16" cy="16" r="13.500" fill="#dedede" /><circle cx="16" cy="16" r="10.500" fill="#4b4b4b" /><circle cx="16" cy="16" r="6.500" fill="none" stroke="#d8d8d8" strokeWidth="2" /><circle cx="16" cy="16" r="8" fill="none" stroke="#d8d8d8" strokeWidth="2.500" strokeDasharray="2.500 2.500" /><circle cx="16" cy="16" r="2" fill="#d8d8d8" /></>,
  <><path d="M4 26h24l2 5H2z" fill="#f08300" /><path d="M14.500 0h3L24 27H8z" fill="#f08300" /><path d="M13 7h6l1.500 5h-9zM10.500 16h11l1.300 5H9.200z" fill="#ececec" /></>,
  <><Sq f="#424242" s="#6f6f6f" y={4} h={25} /><path d="M6 8l3 2-3 2M11 14h5" stroke="#e9e9e9" strokeWidth="1.400" fill="none" /></>,
  <><Sq f="#4a4a4a" s="#777" /><path d="M17 17v-1h4c-1-4 5-4 4 0h5v13H17v-4c-4 1-4-6 0-5z" fill="#8ccc4a" /><path d="M3 17h5c-2 5 5 5 4 0h4v-3c4 0 4-6 0-5V3H3z" fill="#2f2f2f" /></>,
  <><Sq f="#a39a88" s="#6c6454" /><path d="M7 8h7l2 2h9v15H7z" fill="#fbfaf7" stroke="#fbfaf7" strokeLinejoin="round" strokeWidth="2" /></>,
  <><Sq f="#4a4a4a" /><path d="M16 2.500h11a3 3 0 0 1 3 3v21a3 3 0 0 1-3 3H16z" fill="#fbb51f" /><path d="M5 12h8M9 8v8M5 23h8M20 16h8M20 20h8" stroke="#fff" strokeWidth="1.500" /></>,
  <><Sq f="#f3f3f3" s="#888" y={4} h={25} /><path d="M3 10c6-2 6 14 10 12s3-12 8-12 4 8 8 10" stroke="#8ac3e2" strokeWidth="1.700" fill="none" /><path d="M3 20c3 0 2-8 5-6s2 10 5 6 4-8 6-6 1 10 5 8 3-10 5-9" stroke="#d61c4e" strokeWidth="1.700" fill="none" /></>,
  <><Sq f="#eeede4" s="#88857a" y={4} h={25} /><path d="M3 24h26v2a2 2 0 0 1-2 2H5a2 2 0 0 1-2-2z" fill="#bcb9a5" /><circle cx="15" cy="14" r="6.500" fill="#fff" stroke="#555" strokeWidth="1.500" /><circle cx="25" cy="10" r="3" fill="#fff" /><path d="M19 19l5 6" stroke="#333" strokeWidth="2.500" /></>,
  <><Sq f="#f0612b" s="#b8451b" y={4} h={25} /><path d="M11 7c0-7 10-7 10 0" fill="none" stroke="#f5c894" strokeWidth="2" /><path d="M10 25l5-16h2l5 16M8 21h16" fill="none" stroke="#fff" strokeWidth="2.500" /></>,
  <><circle cx="16" cy="16" r="12.500" fill="#8f918d" stroke="#eee" strokeWidth="3" /><path d="M16 5l5 6H11zM16 27l5-6H11zM14 10h4v12h-4z" fill="#444" /><path d="M8.500 11.500h15v4h-15z" fill="#e33" /><path d="M13 11.500h6v4h-6z" fill="#fff" /></>,
  <><path d="M6 4l18-3 4 25-19 4z" fill="#f1f1f1" /><path d="M24 2c-8 2-12 12-9 19 6 1 9-3 9-6" fill="none" stroke="#1f77bd" strokeWidth="3" /><path d="M2 26c8 2 18-4 26-3M4 30l22-9" stroke="#333" strokeWidth="2" fill="none" /></>,
  <><Sq f="#6a93ef" s="#3c5ba6" x={4} w={24} /><path d="M8 8l2 2 4-4M8 23l2 2 4-4" stroke="#2b4a99" strokeWidth="1.600" fill="none" /><path d="M8 15l2 3 4-5M17 16h8" stroke="#fff" strokeWidth="1.800" fill="none" /><path d="M17 9h8M17 24h8" stroke="#2b4a99" /></>,
  <><Sq f="#f3f1ea" s="#888" x={4} w={24} /><path d="M7 7h8M7 10h12M7 13h9M7 16h9M7 19h8" stroke="#999" strokeWidth="1.300" /><path d="M17 11h9v8h-9z" fill="#e5412f" /><circle cx="21.500" cy="15" r="2" fill="none" stroke="#fff" /><path d="M5 23h9v4H6zM17 23h9l-1 4h-8z" fill="#bcd" stroke="#195a9c" strokeWidth="1.800" /></>,
  <><Sq f="#ececec" s="#777" x={4} w={24} /><path d="M4 19h24v8a3 3 0 0 1-3 3H7a3 3 0 0 1-3-3z" fill="#707070" /><path d="M4 17.500h24" stroke="#e01b24" strokeWidth="2.500" /><text x="9.500" y="15" fontFamily="Liberation Serif, serif" fontSize="12" textAnchor="middle" fill="#222">A</text><path d="M16 7h10M16 10h10M16 13h10" stroke="#bbb" /></>,
  <><Sq f="#c0baa8" s="#7d7766" x={4} w={24} /><path d="M13.500 2.500h5v18h-5z" fill="#e6e2d6" /><path d="M14 4h2M16 6h2M14 8h2M16 10h2M14 12h2" stroke="#333" strokeWidth="2" /><circle cx="16" cy="18" r="1.300" fill="#444" /></>,
  <><Sq f="#fafafa" s="#ccc" /><text x="22" y="27" fontFamily={sans} fontSize="16" textAnchor="middle" fill="#444">à</text></>,
  <><path d="M16 1l15 15-15 15L1 16z" fill="#2f7a57" stroke="#174d34" /><path d="M2 3h11v3h-2v11l9-11h-3V3h12v3L13 29H9L5 6H2z" fill="#d2d2d2" stroke="#444" /><text x="23" y="26" fontFamily={sans} fontStyle="italic" fontWeight="700" fontSize="13" textAnchor="middle" fill="#eee" stroke="#333" strokeWidth="0.400">im</text></>,
  <><Sq f="#4d7ef0" s="#3a5cb5" /><path d="M12 13h14v13H12z" fill="#8fb0f8" /><path d="M5 8h15v13H5z" fill="#fff" /></>,
  <><circle cx="16" cy="16" r="14" fill="#ee6129" stroke="#a8471f" /><path d="M12 20.500a7 7 0 1 0 4-11.500" fill="none" stroke="#fff" strokeWidth="2.800" /><path d="M6 17l8-3.500v7z" fill="#fff" /></>,
  <><path d="M5 2h17l6 7v21H4V4z" fill="#fff" stroke="#2f9a2f" strokeWidth="3" /><path d="M22 1h7v9z" fill="#1a661a" /><path d="M8 13.500h14M8 17.500h14M8 21.500h14M8 25h8M8 13v12M13 13v12M18 13v9M22 13v9" stroke="#2f9a2f" strokeWidth="1.400" /><path d="M17 19h8v8h-8z" fill="#fff" stroke="#777" /><path d="M19 25v-3M21 25v-2M23 25v-4" stroke="#d33" strokeWidth="1.500" /></>,
  <><path d="M9 0h10v2h5v2H8V2h1zM8 16h12v6h3v5H7v-4H5v-5h3z" fill="#d8281c" /><path d="M6 4h5v4H9v4H5V6h1zM6 15h6v4H6zM4 28h8v3H2v-2h2zM17 28h6v1h2v2h-8z" fill="#866a10" /><path d="M11 4h9v3h5v3h-4v4H10v-3h1z" fill="#eea03c" /><path d="M17 4h2v4h-2z" fill="#4a3a10" /><path d="M12 18h10v6H12z" fill="#dde" /><path d="M15 19h4v4h-4z" fill="#5668b8" /><path d="M23 16l4-2M23 22l4 3" stroke="#1d1f28" strokeWidth="2.500" /></>,
  <><path d="M1 14l7-1c3-3 6-2 9 0 5-1 8-4 9-9 3 8 1 18-6 20-6 1-9-2-13-5-3 0-7-2-6-5z" fill="#6f6655" /><circle cx="11" cy="12.500" r="3" fill="#fff" /><circle cx="17" cy="12.500" r="3.500" fill="#fff" /><circle cx="12" cy="13" r="1.300" /><circle cx="17" cy="13" r="1.500" /><path d="M17 19l12 11" stroke="#222" strokeWidth="2" /><path d="M17 19l7 6" stroke="#e89b3b" strokeWidth="2" /></>,
  <><path d="M10 3l18-3v24h-3V8l-12 2v16h-3z" fill="#fff" /><circle cx="8.500" cy="26" r="4.300" fill="#fff" /><circle cx="24" cy="24" r="4.300" fill="#fff" /></>,
  <><Sq f="#45b3a3" s="#2b776c" /><path d="M2.500 5A2.500 2.500 0 0 1 5 2.500h22A2.500 2.500 0 0 1 29.500 5v9h-27z" fill="#339b90" /><text x="16" y="22.500" fontFamily="Open Sans, sans-serif" fontSize="17" textAnchor="middle" fill="#fff">28</text></>,
  <><circle cx="16" cy="16" r="14" fill="#e01b3c" stroke="#8e1728" /><path d="M14.500 6h3.500l-.8 13h-2z" fill="#fff" /><circle cx="16.200" cy="23.500" r="2" fill="#fff" /></>,
  <><Sq f="#ececec" s="#aaa" y={4} h={25} /><circle cx="16" cy="16.500" r="9.500" fill="#555" stroke="#999" /><circle cx="16" cy="16.500" r="7.500" fill="#6d3fd0" /><circle cx="16" cy="16.500" r="3" fill="#a07af0" /><circle cx="27" cy="7" r="1.200" fill="#e33" /></>,
  <><Sq f="#fafafa" s="#ccc" /><path d="M5 5h22v20H5z" fill="#1f8fd2" /><path d="M5 23h22v2H5z" fill="#132f45" /><path d="M16 25v-9M16 17C13 14 11 14 9 13.500M16 17c1-4 5-4 9-4M9 9l2 5M20 8l1 5" stroke="#15202b" strokeWidth="1.800" fill="none" /></>,
  <><circle cx="16" cy="16" r="13" fill="#626262" stroke="#e5e5e5" strokeWidth="2.500" /><path d="M9 23L16 6l7 17M7 18h18" stroke="#e5e5e5" strokeWidth="2.800" fill="none" /></>,
];

function Dock() {
  return (
    <div className="relative flex h-[52px] border-t border-[#1a1a1c] bg-[#3f3f44]">
      <svg className="absolute inset-0 size-full" viewBox="0 0 1920 52" preserveAspectRatio="none">
        <defs>
          <linearGradient id="dockTone" x1="0" x2="1" y1="0" y2="0">
            <stop offset="0" stopColor="#41464b" />
            <stop offset="0.05" stopColor="#5a5b5c" />
            <stop offset="0.14" stopColor="#616161" />
            <stop offset="0.25" stopColor="#565657" />
            <stop offset="0.33" stopColor="#55585a" />
            <stop offset="0.4" stopColor="#32363f" />
            <stop offset="0.47" stopColor="#3b414d" />
            <stop offset="0.52" stopColor="#5b4a48" />
            <stop offset="0.55" stopColor="#45454b" />
            <stop offset="0.62" stopColor="#3a3c45" />
            <stop offset="0.67" stopColor="#4c4c4c" />
            <stop offset="0.73" stopColor="#5b5b5b" />
            <stop offset="1" stopColor="#5b5b5b" />
          </linearGradient>
          <filter id="soft"><feGaussianBlur stdDeviation="5" /></filter>
          <filter id="edge"><feGaussianBlur stdDeviation="3" /></filter>
        </defs>
        <path d="M0 0h1920v52H0z" fill="url(#dockTone)" />
        <g filter="url(#soft)" stroke="#26282b" strokeWidth="7" fill="none" opacity="0.7">
          <path d="M180 0c-30 15-40 35-45 55M375 0c20 8 35 20 60 22M500 0c20 15 30 35 60 52M840 0l50 50M720 0l30 52" />
        </g>
        <path d="M1440-10c30 20 50 40 75 80h430V-10z" fill="#2e343d" filter="url(#edge)" />
      </svg>
      {dockIcons.map((icon, i) => (
        <div key={i} className="relative flex w-14 justify-center">
          {i === 1 && <div className="absolute top-px left-1 h-[49px] w-12 rounded-[3px] bg-white/20" />}
          {i === 1 ? (
            <FirefoxLogo className="relative mt-[9px] size-8" id="ffDock" />
          ) : (
            <svg className="mt-[9px] size-8" viewBox="0 0 32 32">{icon}</svg>
          )}
          {(i < 12 || i === 32) && <i className="absolute bottom-[2px] left-[26px] size-[4px] rounded-full bg-[#e95420]" />}
        </div>
      ))}
      <div className="relative mt-[15px] ml-[34px] grid h-5 grid-cols-3 gap-x-[4px] gap-y-[4px]">
        {Array.from({ length: 9 }, (_, i) => (
          <i key={i} className="size-[4px] rounded-[1px] bg-white" />
        ))}
      </div>
    </div>
  );
}

export default function App() {
  return (
    <div className="flex h-[1200px] w-[1920px] flex-col overflow-hidden bg-[#f9f9f9] font-['Open_Sans','Noto_Sans',sans-serif]">
      <TopBar />
      <TitleBar />
      <MenuAndTabs />
      <NavBar />
      <BookmarksBar />
      <div className="relative flex h-[767px] font-['DejaVu_Sans',sans-serif]">
        <HeaderSwoosh />
        <Sidebar />
        <Content />
      </div>
      <div className="font-['DejaVu_Sans',sans-serif]">
        <Footer />
      </div>
      <div className="flex-1" />
      <Dock />
    </div>
  );
}
